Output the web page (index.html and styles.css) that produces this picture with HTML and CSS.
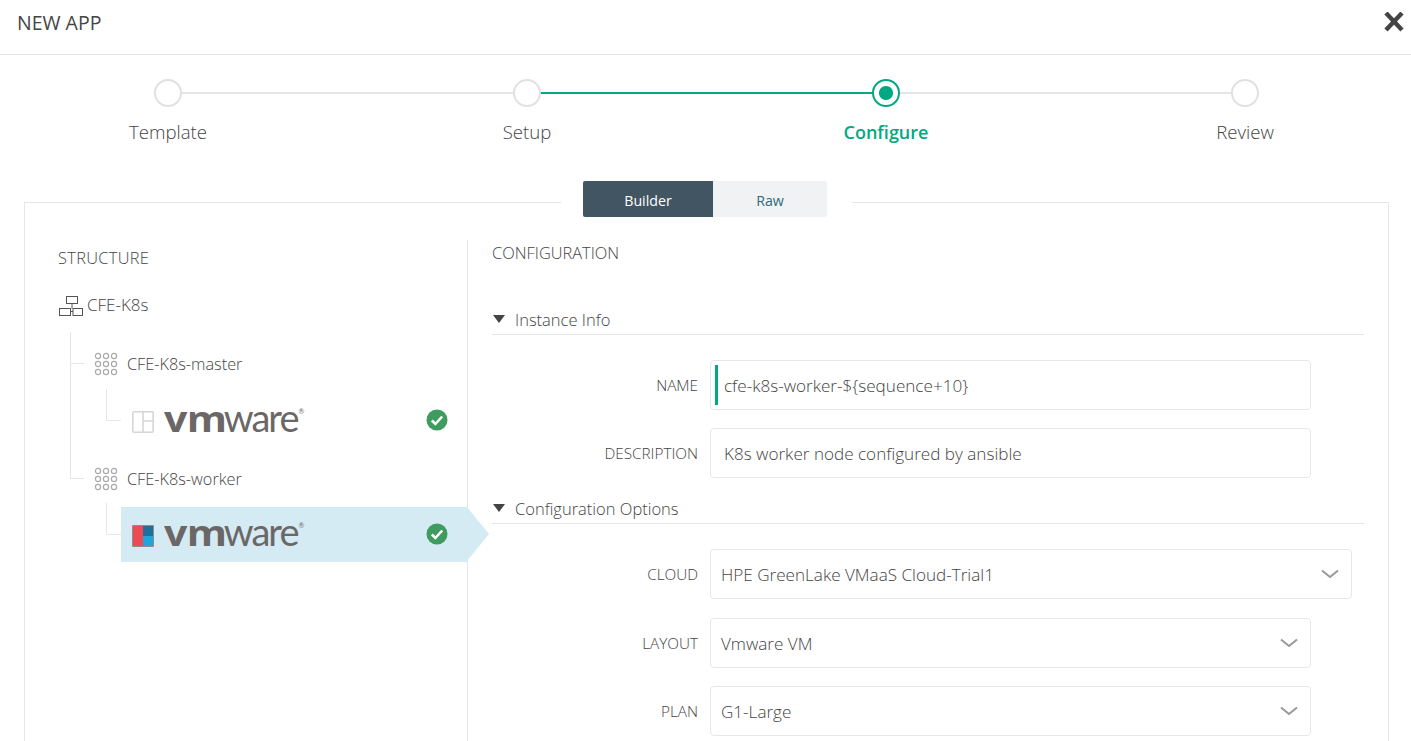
FILE: index.html
```html
<!DOCTYPE html>
<html lang="en">
<head>
    <meta charset="UTF-8">
    <meta name="viewport" content="width=device-width, initial-scale=1.0">
    <title>New App</title>
    <link rel="stylesheet" href="styles.css">
</head>
<body>
    <header class="modal-header">
        <h1>NEW APP</h1>
        <svg class="close-icon" width="22" height="20" viewBox="0 0 22 20">
            <path d="M3 1 L19 18 M19 1 L3 18" stroke="#444" stroke-width="4.4" fill="none"/>
        </svg>
    </header>

    <ol class="stepper">
        <li class="step"><span class="dot"></span><span class="step-label">Template</span></li>
        <li class="step step-green-line"><span class="dot"></span><span class="step-label">Setup</span></li>
        <li class="step step-active"><span class="dot"></span><span class="step-label">Configure</span></li>
        <li class="step step-last"><span class="dot"></span><span class="step-label">Review</span></li>
    </ol>

    <main class="panel">
        <div class="tabs">
            <button class="tab tab-on">Builder</button>
            <button class="tab">Raw</button>
        </div>

        <section class="structure">
            <h2 class="col-title col-title-left">STRUCTURE</h2>

            <div class="tree-root">
                <svg class="root-icon" width="24" height="22" viewBox="0 0 24 22" fill="none" stroke="#555" stroke-width="1">
                    <rect x="7.5" y="0.5" width="11" height="7"/>
                    <path d="M13 7.5 V12.5 M11.5 15.5 H14"/>
                    <rect x="0.5" y="12.5" width="11" height="7"/>
                    <rect x="14" y="12.5" width="9.5" height="7"/>
                </svg>
                <span>CFE-K8s</span>
            </div>

            <div class="tree-branch">
                <div class="tree-node tree-node-first">
                    <svg class="dots" width="24" height="24" viewBox="0 0 24 24" fill="none" stroke="#aaa" stroke-width="1.2">
                        <circle cx="4" cy="4" r="2.6"/><circle cx="12" cy="4" r="2.6"/><circle cx="20" cy="4" r="2.6"/>
                        <circle cx="4" cy="12" r="2.6"/><circle cx="12" cy="12" r="2.6"/><circle cx="20" cy="12" r="2.6"/>
                        <circle cx="4" cy="20" r="2.6"/><circle cx="12" cy="20" r="2.6"/><circle cx="20" cy="20" r="2.6"/>
                    </svg>
                    <span>CFE-K8s-master</span>
                </div>
                <div class="tree-leaf">
                    <svg class="leaf-icon" width="22" height="22" viewBox="0 0 22 22" fill="none" stroke="#d6d6d6" stroke-width="1.6">
                        <rect x="0.8" y="0.8" width="20.4" height="20.4" rx="1"/>
                        <path d="M11 1 V21 M11 10 H21"/>
                    </svg>
                    <span class="vm-logo"><b>vm</b>ware<sup>®</sup></span>
                    <svg class="check" width="22" height="22" viewBox="0 0 22 22">
                        <circle cx="11" cy="11" r="10.5" fill="#3f9c5f"/>
                        <path d="M5.8 11.5 L9.4 15 L16.2 7.5" stroke="#fff" stroke-width="2.6" fill="none"/>
                    </svg>
                </div>

                <div class="tree-node tree-node-second">
                    <svg class="dots" width="24" height="24" viewBox="0 0 24 24" fill="none" stroke="#aaa" stroke-width="1.2">
                        <circle cx="4" cy="4" r="2.6"/><circle cx="12" cy="4" r="2.6"/><circle cx="20" cy="4" r="2.6"/>
                        <circle cx="4" cy="12" r="2.6"/><circle cx="12" cy="12" r="2.6"/><circle cx="20" cy="12" r="2.6"/>
                        <circle cx="4" cy="20" r="2.6"/><circle cx="12" cy="20" r="2.6"/><circle cx="20" cy="20" r="2.6"/>
                    </svg>
                    <span>CFE-K8s-worker</span>
                </div>
                <div class="tree-leaf tree-leaf-on">
                    <svg class="leaf-icon" width="22" height="22" viewBox="0 0 22 22">
                        <rect x="0" y="0" width="22" height="22" rx="1" fill="#8a8f93"/>
                        <rect x="1" y="1" width="10" height="20" fill="#ee4a55"/>
                        <rect x="11" y="1" width="10" height="10" fill="#1f6f9c"/>
                        <rect x="11" y="11" width="10" height="10" fill="#1ea6dc"/>
                    </svg>
                    <span class="vm-logo"><b>vm</b>ware<sup>®</sup></span>
                    <svg class="check" width="22" height="22" viewBox="0 0 22 22">
                        <circle cx="11" cy="11" r="10.5" fill="#3f9c5f"/>
                        <path d="M5.8 11.5 L9.4 15 L16.2 7.5" stroke="#fff" stroke-width="2.6" fill="none"/>
                    </svg>
                </div>
            </div>
        </section>

        <section class="config">
            <h2 class="col-title">CONFIGURATION</h2>

            <h3 class="group-head group-first"><span class="caret"></span>Instance Info</h3>
            <div class="rows">
                <div class="row">
                    <label class="row-label">NAME</label>
                    <div class="field field-focus">cfe-k8s-worker-${sequence+10}</div>
                </div>
                <div class="row">
                    <label class="row-label">DESCRIPTION</label>
                    <div class="field field-text">K8s worker node configured by ansible</div>
                </div>
            </div>

            <h3 class="group-head group-second"><span class="caret"></span>Configuration Options</h3>
            <div class="rows">
                <div class="row row-cloud">
                    <label class="row-label">CLOUD</label>
                    <div class="field field-select field-wide">HPE GreenLake VMaaS Cloud-Trial1
                        <svg width="18" height="10" viewBox="0 0 18 10"><path d="M1 1.5 L9 8 L17 1.5" stroke="#999" stroke-width="2" fill="none"/></svg>
                    </div>
                </div>
                <div class="row">
                    <label class="row-label">LAYOUT</label>
                    <div class="field field-select">Vmware VM
                        <svg width="18" height="10" viewBox="0 0 18 10"><path d="M1 1.5 L9 8 L17 1.5" stroke="#999" stroke-width="2" fill="none"/></svg>
                    </div>
                </div>
                <div class="row">
                    <label class="row-label">PLAN</label>
                    <div class="field field-select">G1-Large
                        <svg width="18" height="10" viewBox="0 0 18 10"><path d="M1 1.5 L9 8 L17 1.5" stroke="#999" stroke-width="2" fill="none"/></svg>
                    </div>
                </div>
            </div>
        </section>
    </main>
</body>
</html>
```

FILE: styles.css
```css
html, body {
    height: 741px;
    overflow: hidden;
}
body {
    margin: 0;
    background-color: #fff;
    font-family: "Open Sans", Lato, sans-serif;
    font-weight: 300;
    color: #444;
}

.modal-header {
    height: 44px;
    border-bottom: 1px solid #e4e4e4;
    display: flex;
    align-items: center;
    justify-content: space-between;
    padding: 0 6px 10px 17px;
}
.modal-header h1 {
    margin: 0;
    font-size: 19.5px;
    font-weight: 400;
    color: #444;
}
.close-icon {
    margin-top: -1px;
}

.stepper {
    list-style: none;
    margin: 25px 0 0 -12px;
    padding: 0;
    display: grid;
    grid-template-columns: repeat(4, 359px);
    width: 1436px;
    height: 122px;
}
.step {
    display: flex;
    flex-direction: column;
    align-items: center;
    position: relative;
}
.step::after {
    content: "";
    position: absolute;
    left: 50%;
    top: 12px;
    width: 100%;
    height: 2px;
    background-color: #e3e5e7;
}
.step-green-line::after {
    background-color: #01a982;
}
.step-last::after {
    display: none;
}
.dot {
    width: 24px;
    height: 24px;
    border: 2px solid #dfe1e3;
    border-radius: 50%;
    background-color: #fff;
    position: relative;
    z-index: 1;
    margin: -1px 0 13px;
}
.step-label {
    font-size: 18.6px;
    line-height: 24px;
    padding-left: 1px;
}
.step-active .dot {
    border-color: #01a982;
    background: radial-gradient(circle, #01a982 0 6.5px, #fff 7.5px);
}
.step-active .step-label {
    color: #01a982;
    font-size: 18px;
    font-weight: 600;
}

.panel {
    position: relative;
    margin: 0 22px 0 24px;
    border: 1px solid #e4e6e8;
    border-bottom: none;
    display: flex;
    height: 539px;
    box-sizing: border-box;
}
.tabs {
    position: absolute;
    top: -22px;
    left: 536px;
    display: flex;
    padding: 0 25px 0 22px;
    background-color: #fff;
}
.tab {
    height: 36px;
    border: none;
    font: inherit;
    font-size: 14.2px;
    font-weight: 400;
    color: #2f6a78;
    background-color: #f0f2f3;
    width: 114px;
    padding: 2px 0 0;
    border-radius: 0 2px 2px 0;
}
.tab-on {
    width: 130px;
    background-color: #425563;
    color: #fff;
    border-radius: 2px 0 0 2px;
}

.col-title {
    margin: 0;
    font-size: 16.4px;
    line-height: 20px;
    font-weight: 300;
}
.col-title-left {
    margin-left: -1px;
    letter-spacing: 0.3px;
}

.structure {
    width: 443px;
    box-sizing: border-box;
    padding: 8px 0 0 34px;
    margin-top: 37px;
    border-right: 1px solid #e4e6e8;
    position: relative;
    flex-shrink: 0;
}
.tree-root {
    display: flex;
    align-items: center;
    gap: 4px;
    margin-top: 24px;
    height: 24px;
    font-size: 17px;
}
.root-icon {
    margin-top: 6px;
}
.tree-branch {
    margin-top: 36px;
    position: relative;
    margin-left: -34px;
}
.tree-branch::before {
    content: "";
    position: absolute;
    left: 45px;
    top: -20px;
    height: 146px;
    border-left: 1px solid #e4e6e8;
}
.tree-node {
    display: flex;
    align-items: center;
    gap: 9px;
    height: 24px;
    padding-left: 69px;
    font-size: 16.3px;
    position: relative;
}
.tree-node::before {
    content: "";
    position: absolute;
    left: 45px;
    top: 11px;
    width: 14px;
    border-top: 1px solid #e4e6e8;
}
.tree-node-second {
    margin-top: 19px;
}
.tree-leaf {
    display: flex;
    align-items: center;
    height: 55px;
    margin: 17px 0 0 96px;
    padding-left: 11px;
    padding-right: 19px;
    position: relative;
}
.tree-leaf::before {
    content: "";
    position: absolute;
    left: -15px;
    top: -4px;
    width: 14px;
    height: 31px;
    border-left: 1px solid #e4e6e8;
    border-bottom: 1px solid #e4e6e8;
}
.tree-leaf-on {
    background-color: #d5ebf3;
    margin-top: 16px;
}
.tree-leaf-on::after {
    content: "";
    position: absolute;
    right: -22px;
    top: 0;
    border-left: 22px solid #d5ebf3;
    border-top: 27.5px solid transparent;
    border-bottom: 27.5px solid transparent;
}
.leaf-icon {
    margin-top: 2px;
}
.vm-logo {
    font-family: Lato, sans-serif;
    font-size: 38px;
    font-weight: 400;
    line-height: 40px;
    color: #6b6767;
    margin-left: 10px;
    letter-spacing: -2px;
    margin-top: -6px;
}
.vm-logo b {
    display: inline-block;
    font-family: "Open Sans", sans-serif;
    font-size: 36px;
    letter-spacing: -0.5px;
    font-weight: 700;
    transform: scaleX(1.14);
    transform-origin: left;
    margin-right: 5px;
}
.vm-logo sup {
    font-size: 7px;
    line-height: 0;
    vertical-align: 18px;
    letter-spacing: 0;
    margin-left: 1px;
}
.check {
    margin-left: auto;
    margin-top: -2px;
}

.config {
    flex: 1;
    padding: 40px 24px 0 24px;
}
.group-head {
    margin: 0;
    height: 18px;
    padding-bottom: 6px;
    font-size: 16.5px;
    font-weight: 300;
    border-bottom: 1px solid #e4e6e8;
    display: flex;
    align-items: center;
}
.group-first {
    margin-top: 47px;
}
.group-second {
    margin-top: 21px;
}
.caret {
    width: 0;
    height: 0;
    border-left: 6px solid transparent;
    border-right: 6px solid transparent;
    border-top: 8px solid #444;
    margin: 0 10px 0 1px;
}
.rows {
    display: flex;
    flex-direction: column;
    gap: 18px;
    margin-top: 25px;
}
.row {
    display: flex;
    align-items: center;
}
.row-cloud {
    margin-bottom: 1px;
}
.row-label {
    width: 206px;
    text-align: right;
    font-size: 15.3px;
    margin-right: 12px;
    flex-shrink: 0;
}
.field {
    width: 601px;
    height: 50px;
    box-sizing: border-box;
    border: 1px solid #e6e7e9;
    border-radius: 4px;
    font-size: 17.1px;
    display: flex;
    align-items: center;
    padding: 0 10px;
}
.field-text {
    padding-left: 13px;
}
.field-focus {
    padding-left: 13px;
    position: relative;
}
.field-focus::before {
    content: "";
    position: absolute;
    left: 4px;
    top: 4px;
    bottom: 4px;
    width: 3px;
    background-color: #01a982;
}
.field-select {
    justify-content: space-between;
    padding-right: 12px;
}
.field-wide {
    width: 642px;
}
```
